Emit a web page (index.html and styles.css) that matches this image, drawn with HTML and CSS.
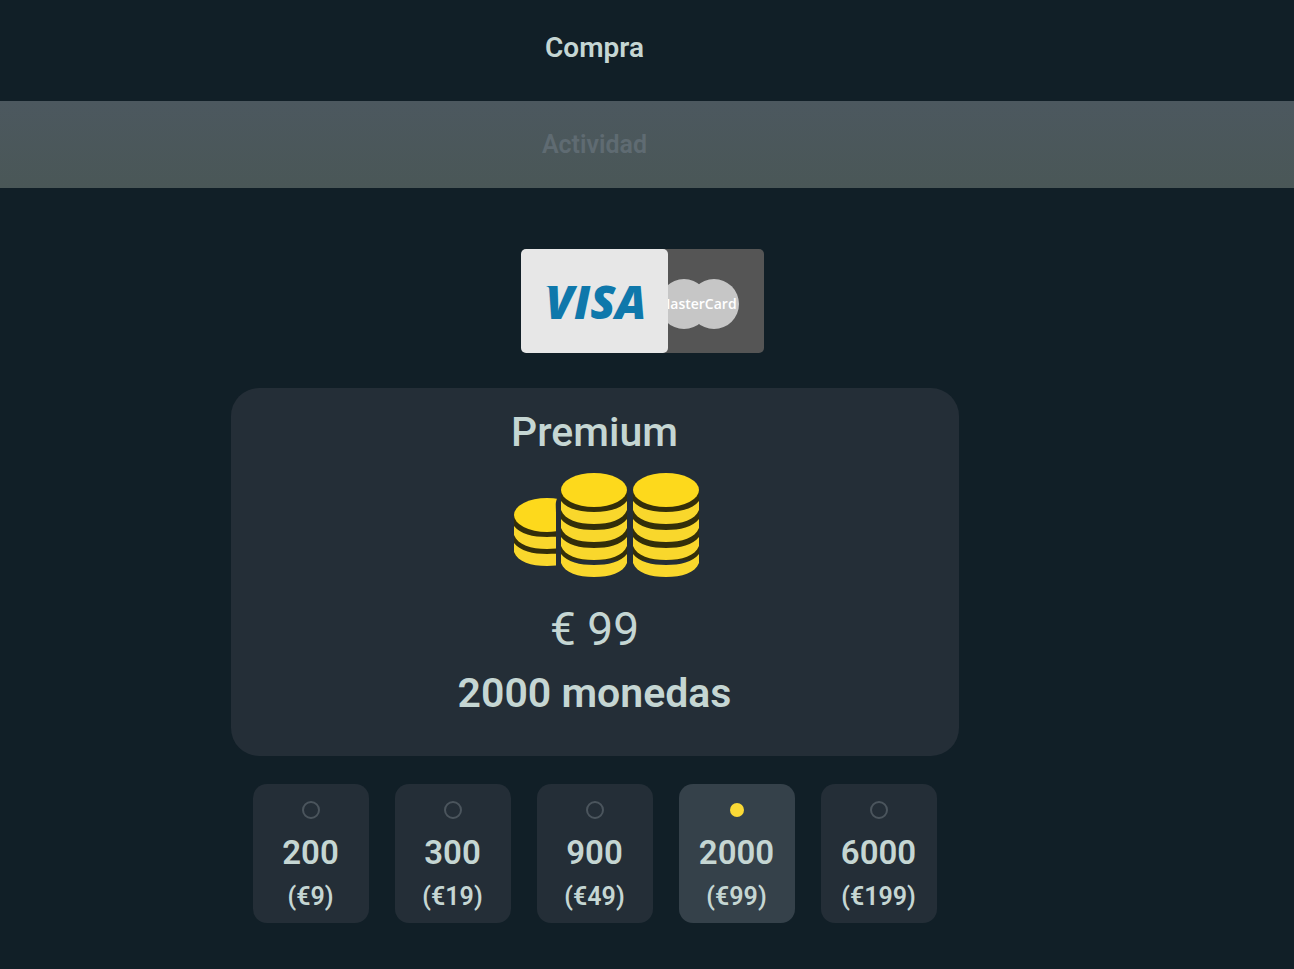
FILE: index.html
```html
<!DOCTYPE html>
<html lang="es">
<head>
    <meta charset="UTF-8">
    <meta name="viewport" content="width=device-width, initial-scale=1.0">
    <title>Compra</title>
    <link rel="stylesheet" href="styles.css">
</head>
<body>
    <nav class="tabs">
        <button type="button" class="tab">Compra</button>
        <button type="button" class="tab tab-inactive">Actividad</button>
    </nav>

    <main class="content">
        <!-- Payment methods -->
        <div class="payment">
            <button type="button" class="card visa" aria-label="VISA">
                <svg width="147" height="104" viewBox="0 0 147 104">
                    <text class="visa-text" x="75" y="70" text-anchor="middle">VISA</text>
                    <path d="M25 37h10v12c-2-6-5-10-10-12z" fill="#0f78ab"/>
                </svg>
            </button>
            <button type="button" class="card mastercard" aria-label="MasterCard">
                <svg width="147" height="104" viewBox="0 0 147 104">
                    <circle cx="67" cy="55" r="25" fill="#c6c6c6"/>
                    <circle cx="97" cy="55" r="25" fill="#c6c6c6"/>
                    <text class="mastercard-text" x="80" y="60" text-anchor="middle">MasterCard</text>
                </svg>
            </button>
        </div>

        <section class="plan">
            <h2>Premium</h2>
            <svg class="coins" width="190" height="108" viewBox="0 0 190 108">
                <defs>
                    <g id="coin-side">
                        <path d="M0 2C6 10 19 13 33 13S60 10 66 2V11C62 21 49 25 33 25S4 21 0 11Z" fill="#f9d72c"/>
                    </g>
                    <g id="stack">
                        <rect x="0" y="17" width="66" height="70" fill="#332e0a"/>
                        <ellipse cx="33" cy="17" rx="33" ry="17" fill="#fdd91c"/>
                        <use href="#coin-side" x="0" y="26"/>
                        <use href="#coin-side" x="0" y="44"/>
                        <use href="#coin-side" x="0" y="62"/>
                        <use href="#coin-side" x="0" y="79"/>
                    </g>
                    <clipPath id="left-clip"><path d="M0 0H50V22C42 28 44 34 44 42V108H0Z"/></clipPath>
                </defs>
                <g clip-path="url(#left-clip)">
                    <path d="M2 44H66V84H2Z" fill="#332e0a"/>
                    <ellipse cx="35" cy="44" rx="33" ry="17" fill="#fdd91c"/>
                    <use href="#coin-side" x="2" y="53"/>
                    <use href="#coin-side" x="2" y="70"/>
                </g>
                <use href="#stack" x="49" y="2"/>
                <use href="#stack" x="121" y="2"/>
            </svg>
            <p class="price">€ 99</p>
            <p class="amount">2000 monedas</p>
        </section>

        <!-- Coin packs -->
        <form class="options">
            <label class="option">
                <input type="radio" name="pack" value="200">
                <span class="option-amount">200</span>
                <span class="option-price">(€9)</span>
            </label>
            <label class="option">
                <input type="radio" name="pack" value="300">
                <span class="option-amount">300</span>
                <span class="option-price">(€19)</span>
            </label>
            <label class="option">
                <input type="radio" name="pack" value="900">
                <span class="option-amount">900</span>
                <span class="option-price">(€49)</span>
            </label>
            <label class="option">
                <input type="radio" name="pack" value="2000" checked>
                <span class="option-amount">2000</span>
                <span class="option-price">(€99)</span>
            </label>
            <label class="option">
                <input type="radio" name="pack" value="6000">
                <span class="option-amount">6000</span>
                <span class="option-price">(€199)</span>
            </label>
        </form>
    </main>
</body>
</html>
```
FILE: styles.css
```css
* {
    box-sizing: border-box;
}
body {
    margin: 0;
    background-color: #111f27;
    color: #c5d6d3;
    font-family: Roboto, sans-serif;
    font-weight: 600;
}
h2, p {
    margin: 0;
}
button {
    border: none;
    padding: 0;
    font: inherit;
    color: inherit;
    cursor: pointer;
}
.tabs {
    display: flex;
    flex-direction: column;
}
.tab {
    height: 101px;
    padding: 0 105px 6px 0;
    background: none;
    font-size: 28px;
}
.tab-inactive {
    height: 87px;
    padding-bottom: 0;
    background: linear-gradient(#4c585f, #4a5757);
    color: #5f6b72;
    font-size: 25px;
}
.content {
    display: flex;
    flex-direction: column;
    align-items: center;
    padding: 61px 105px 44px 0;
}
.payment {
    display: flex;
    width: 147px;
    margin-bottom: 35px;
}
.card {
    flex: none;
    height: 104px;
    border-radius: 5px;
}
.card svg {
    display: block;
}
.visa {
    z-index: 1;
    background-color: #e7e7e7;
}
.mastercard {
    margin-left: -51px;
    background-color: #555;
}
.visa-text {
    font: italic 800 46px "Open Sans", sans-serif;
    fill: #0f78ab;
}
.mastercard-text {
    font: 600 14px "Open Sans", sans-serif;
    fill: #fff;
}
.plan {
    display: flex;
    flex-direction: column;
    align-items: center;
    width: 100%;
    max-width: 728px;
    padding: 20px 20px 37px;
    border-radius: 28px;
    background-color: #242e37;
}
.plan h2 {
    font-size: 41px;
    font-weight: 500;
    line-height: 48px;
}
.coins {
    margin: 15px 0 22px 24px;
}
.price {
    font-size: 46px;
    font-weight: 400;
    line-height: 56px;
}
.amount {
    margin-top: 10px;
    font-size: 41px;
    line-height: 52px;
}
.options {
    display: flex;
    gap: 26px;
    margin-top: 28px;
}
.option {
    display: flex;
    flex-direction: column;
    align-items: center;
    width: 116px;
    padding: 17px 0 9px;
    border-radius: 14px;
    background-color: #242e37;
    cursor: pointer;
}
.option:has(input:checked) {
    background-color: #35414a;
}
.option input {
    appearance: none;
    width: 18px;
    height: 18px;
    margin: 0;
    border: 2px solid #4b555d;
    border-radius: 50%;
}
.option input:checked {
    border-color: transparent;
    background: #fad936 padding-box;
}
.option-amount {
    margin-top: 12px;
    font-size: 33px;
    line-height: 44px;
}
.option-price {
    margin-top: 5px;
    font-size: 25px;
    line-height: 34px;
}
```
